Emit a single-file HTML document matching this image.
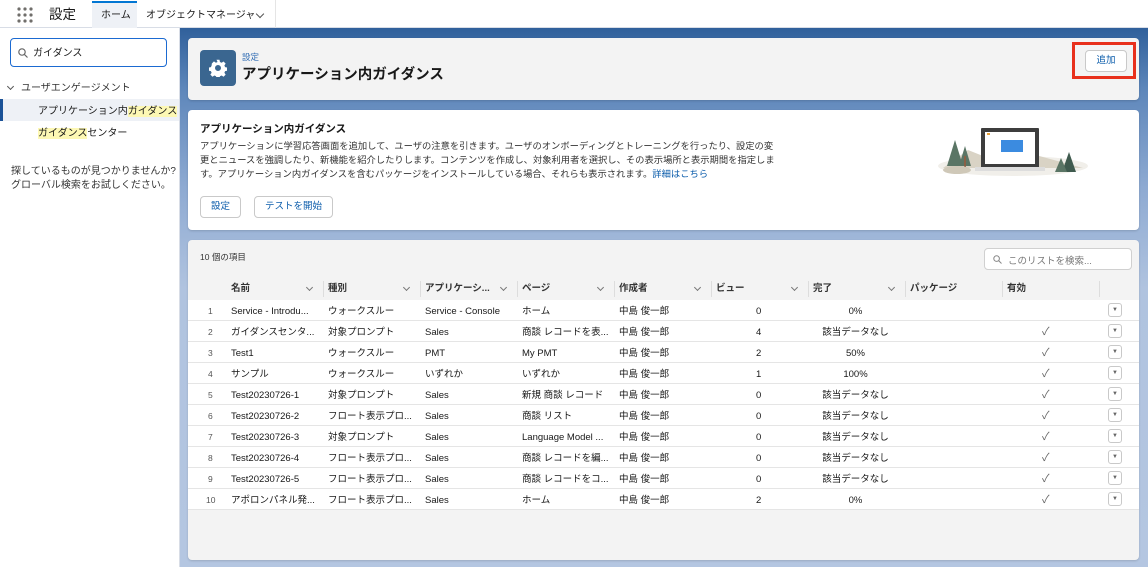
<!DOCTYPE html>
<html><head><meta charset="utf-8"><style>
*{box-sizing:border-box;margin:0;padding:0}
body{width:1148px;height:567px;overflow:hidden;font-family:"Liberation Sans","Noto Sans CJK JP",sans-serif;color:#181818;background:#fff;position:relative;font-size:9.5px}
.abs{position:absolute;white-space:nowrap}
#top{position:absolute;left:0;top:0;width:1148px;height:28px;background:#fff;border-bottom:1px solid #d8dde6}
#side{position:absolute;left:0;top:28px;width:180px;height:539px;background:#fff;border-right:1px solid #d8dde6;overflow:hidden}
#main{position:absolute;left:180px;top:28px;width:968px;height:539px;background:linear-gradient(#30609b 0px,#5d86ba 60px,#8eaad2 160px,#b0c3df 260px,#b4c6e1 539px)}
.card{position:absolute;border-radius:4px;box-shadow:0 1px 2px rgba(0,0,0,.15)}
.btn{position:absolute;background:#fff;border:1px solid #c9c9c9;border-radius:4px;color:#0b5cab;font-size:9.5px;text-align:center}
.row{position:absolute;left:0;width:951px;height:21px;background:#fff;border-bottom:1px solid #e5e5e5}
.row span{position:absolute;top:1px;height:21px;line-height:21px;white-space:nowrap}
.hd span{position:absolute;top:0;height:22px;line-height:22px;white-space:nowrap;font-weight:bold;color:#333}
.hd i{position:absolute;top:7px;width:5px;height:5px;border-right:1px solid #777;border-bottom:1px solid #777;transform:rotate(45deg)}
.dd{position:absolute;left:920px;top:3px;width:14px;height:14px;border:1px solid #c9c9c9;border-radius:3px;font-size:6px;color:#666;text-align:center;line-height:13px}
.sep{position:absolute;top:3px;width:1px;height:16px;background:#ddd}
</style></head><body>
<div id="top">
 <svg class="abs" style="left:17px;top:7px" width="16" height="16"><g fill="#706e6b"><circle cx="2" cy="2" r="1.6"/><circle cx="8" cy="2" r="1.6"/><circle cx="14" cy="2" r="1.6"/><circle cx="2" cy="8" r="1.6"/><circle cx="8" cy="8" r="1.6"/><circle cx="14" cy="8" r="1.6"/><circle cx="2" cy="14" r="1.6"/><circle cx="8" cy="14" r="1.6"/><circle cx="14" cy="14" r="1.6"/></g></svg>
 <div class="abs" style="left:49px;top:6px;font-size:13.5px;line-height:18px">設定</div>
 <div class="abs" style="left:92px;top:1px;width:45px;height:27px;background:#eef1f6;border-top:2px solid #0176d3"></div>
 <div class="abs" style="left:101px;top:9px;font-size:10px;line-height:14px">ホーム</div>
 <div class="abs" style="left:146px;top:9px;font-size:10px;line-height:14px">オブジェクトマネージャ</div>
 <div class="abs" style="left:257px;top:11px;width:6px;height:6px;border-right:1px solid #555;border-bottom:1px solid #555;transform:rotate(45deg)"></div>
 <div class="abs" style="left:275px;top:0;width:1px;height:28px;background:#e5e5e5"></div>
</div>
<div id="side">
 <div class="abs" style="left:10px;top:10px;width:157px;height:29px;border:1.5px solid #1b6ad1;border-radius:4px"></div>
 <svg class="abs" style="left:18px;top:20px" width="10" height="10"><circle cx="4" cy="4" r="3.2" fill="none" stroke="#666" stroke-width="1.2"/><line x1="6.4" y1="6.4" x2="9.5" y2="9.5" stroke="#666" stroke-width="1.2"/></svg>
 <div class="abs" style="left:33px;top:19px;font-size:10px;line-height:14px">ガイダンス</div>
 <div class="abs" style="left:8px;top:56px;width:5px;height:5px;border-right:1px solid #555;border-bottom:1px solid #555;transform:rotate(45deg)"></div>
 <div class="abs" style="left:21px;top:54px;font-size:10px;line-height:14px;color:#333">ユーザエンゲージメント</div>
 <div class="abs" style="left:0;top:71px;width:179px;height:22px;background:#eef1f6;border-left:3px solid #1b5297"></div>
 <div class="abs" style="left:38px;top:77px;font-size:10px;line-height:14px">アプリケーション内<span style="background:#fdf8b4">ガイダンス</span></div>
 <div class="abs" style="left:38px;top:99px;font-size:10px;line-height:14px"><span style="background:#fdf8b4">ガイダンス</span>センター</div>
 <div class="abs" style="left:11px;top:137px;font-size:10px;line-height:14px;color:#333">探しているものが見つかりませんか?<br>グローバル検索をお試しください。</div>
</div>
<div id="main">
 <div class="card" style="left:8px;top:10px;width:951px;height:62px;background:#f3f3f3">
  <div class="abs" style="left:12px;top:12px;width:36px;height:36px;background:#3a6690;border-radius:4px"></div>
  <svg class="abs" style="left:21px;top:21px" width="18" height="18" viewBox="0 0 24 24"><path fill="#fff" d="M10 1h4l.6 3 2.2 1 2.6-1.7 2.8 2.8-1.7 2.6 1 2.2 3 .6v4l-3 .6-1 2.2 1.7 2.6-2.8 2.8-2.6-1.7-2.2 1-.6 3h-4l-.6-3-2.2-1-2.6 1.7-2.8-2.8 1.7-2.6-1-2.2-3-.6v-4l3-.6 1-2.2L3.8 6l2.8-2.8L9.2 5l2.2-1zM12 8a4 4 0 100 8 4 4 0 000-8z"/></svg>
  <div class="abs" style="left:54px;top:13px;font-size:8.5px;color:#2e6bb3">設定</div>
  <div class="abs" style="left:54px;top:25px;font-size:14.5px;font-weight:bold">アプリケーション内ガイダンス</div>
  <div class="abs" style="left:884px;top:4px;width:64px;height:37px;border:3px solid #e8301c"></div>
  <div class="btn" style="left:897px;top:12px;width:42px;height:22px;line-height:20px">追加</div>
 </div>
 <div class="card" style="left:8px;top:82px;width:951px;height:120px;background:#fff">
  <div class="abs" style="left:12px;top:11px;font-size:10.5px;font-weight:bold">アプリケーション内ガイダンス</div>
  <div class="abs" style="left:12px;top:29px;font-size:9.3px;line-height:14.2px;color:#333">アプリケーションに学習応答画面を追加して、ユーザの注意を引きます。ユーザのオンボーディングとトレーニングを行ったり、設定の変<br>更とニュースを強調したり、新機能を紹介したりします。コンテンツを作成し、対象利用者を選択し、その表示場所と表示期間を指定しま<br>す。アプリケーション内ガイダンスを含むパッケージをインストールしている場合、それらも表示されます。<span style="color:#0b5cab">詳細はこちら</span></div>
  <div class="btn" style="left:12px;top:86px;width:41px;height:22px;line-height:20px">設定</div>
  <div class="btn" style="left:66px;top:86px;width:79px;height:22px;line-height:20px">テストを開始</div>
  <svg class="abs" style="left:745px;top:18px" width="160" height="50">
   <ellipse cx="80" cy="38" rx="75" ry="10" fill="#f1efea"/>
   <path d="M10 40 L35 22 L55 30 L70 18 L150 40Z" fill="#d9d3c5"/>
   <path d="M22 12 L14 38 L30 38Z" fill="#5a7565"/>
   <path d="M32 18 L26 38 L38 38Z" fill="#5a7565"/><rect x="31" y="28" width="2" height="12" fill="#8a6045"/>
   <path d="M136 24 L129 44 L143 44Z" fill="#3f5a4e"/><path d="M128 30 L122 44 L134 44Z" fill="#5a7565"/>
   <ellipse cx="24" cy="42" rx="14" ry="4" fill="#cfc8b8"/>
   <rect x="48" y="0" width="58" height="40" fill="#3d3d3d" rx="1"/>
   <rect x="52" y="4" width="50" height="32" fill="#fff"/>
   <rect x="54" y="5" width="3" height="2" fill="#e8a13a"/>
   <rect x="68" y="12" width="22" height="12" fill="#3b8be0"/>
   <rect x="42" y="39" width="70" height="4" fill="#ddd"/>
  </svg>
 </div>
 <div class="card" style="left:8px;top:212px;width:951px;height:320px;background:#f3f3f3">
  <div class="abs" style="left:12px;top:11px;font-size:8.5px;color:#333">10 個の項目</div>
  <div class="abs" style="left:796px;top:8px;width:148px;height:22px;background:#fff;border:1px solid #d0d0d0;border-radius:4px"></div>
  <svg class="abs" style="left:805px;top:15px" width="9" height="9"><circle cx="3.6" cy="3.6" r="2.8" fill="none" stroke="#888" stroke-width="1"/><line x1="5.6" y1="5.6" x2="8.5" y2="8.5" stroke="#888" stroke-width="1"/></svg>
  <div class="abs" style="left:820px;top:13px;font-size:9.5px;color:#777">このリストを検索...</div>
  <div class="hd" style="position:absolute;left:0;top:38px;width:951px;height:22px">
   <span style="left:43px">名前</span><i style="left:119px"></i>
   <span style="left:140px">種別</span><i style="left:216px"></i>
   <span style="left:237px">アプリケーシ...</span><i style="left:313px"></i>
   <span style="left:334px">ページ</span><i style="left:410px"></i>
   <span style="left:431px">作成者</span><i style="left:507px"></i>
   <span style="left:528px">ビュー</span><i style="left:604px"></i>
   <span style="left:625px">完了</span><i style="left:701px"></i>
   <span style="left:722px">パッケージ</span>
   <span style="left:819px">有効</span>
   <div class="sep" style="left:135px"></div><div class="sep" style="left:232px"></div><div class="sep" style="left:329px"></div><div class="sep" style="left:426px"></div><div class="sep" style="left:523px"></div><div class="sep" style="left:620px"></div><div class="sep" style="left:717px"></div><div class="sep" style="left:814px"></div><div class="sep" style="left:911px"></div>
  </div>
  <div id="rows"></div>
 </div>
</div>
<script>
var d=[["Service - Introdu...","ウォークスルー","Service - Console","ホーム","0","0%",0],
["ガイダンスセンタ...","対象プロンプト","Sales","商談 レコードを表...","4","該当データなし",1],
["Test1","ウォークスルー","PMT","My PMT","2","50%",1],
["サンプル","ウォークスルー","いずれか","いずれか","1","100%",1],
["Test20230726-1","対象プロンプト","Sales","新規 商談 レコード","0","該当データなし",1],
["Test20230726-2","フロート表示プロ...","Sales","商談 リスト","0","該当データなし",1],
["Test20230726-3","対象プロンプト","Sales","Language Model ...","0","該当データなし",1],
["Test20230726-4","フロート表示プロ...","Sales","商談 レコードを編...","0","該当データなし",1],
["Test20230726-5","フロート表示プロ...","Sales","商談 レコードをコ...","0","該当データなし",1],
["アポロンパネル発...","フロート表示プロ...","Sales","ホーム","2","0%",1]];
var h="";d.forEach(function(r,i){h+='<div class="row" style="top:'+(60+i*21)+'px"><span style="left:'+(i==9?18:20)+'px;color:#555;font-size:8.5px">'+(i+1)+'</span><span style="left:43px">'+r[0]+'</span><span style="left:140px">'+r[1]+'</span><span style="left:237px">'+r[2]+'</span><span style="left:334px">'+r[3]+'</span><span style="left:431px">中島 俊一郎</span><span style="left:568px">'+r[4]+'</span><span style="left:630px;width:75px;text-align:center">'+r[5]+'</span>'+(r[6]?'<span style="left:854px;color:#666;font-size:11px">&#10003;</span>':'')+'<div class="dd">&#9660;</div></div>'});
document.getElementById("rows").innerHTML=h;
</script>
</body></html>
